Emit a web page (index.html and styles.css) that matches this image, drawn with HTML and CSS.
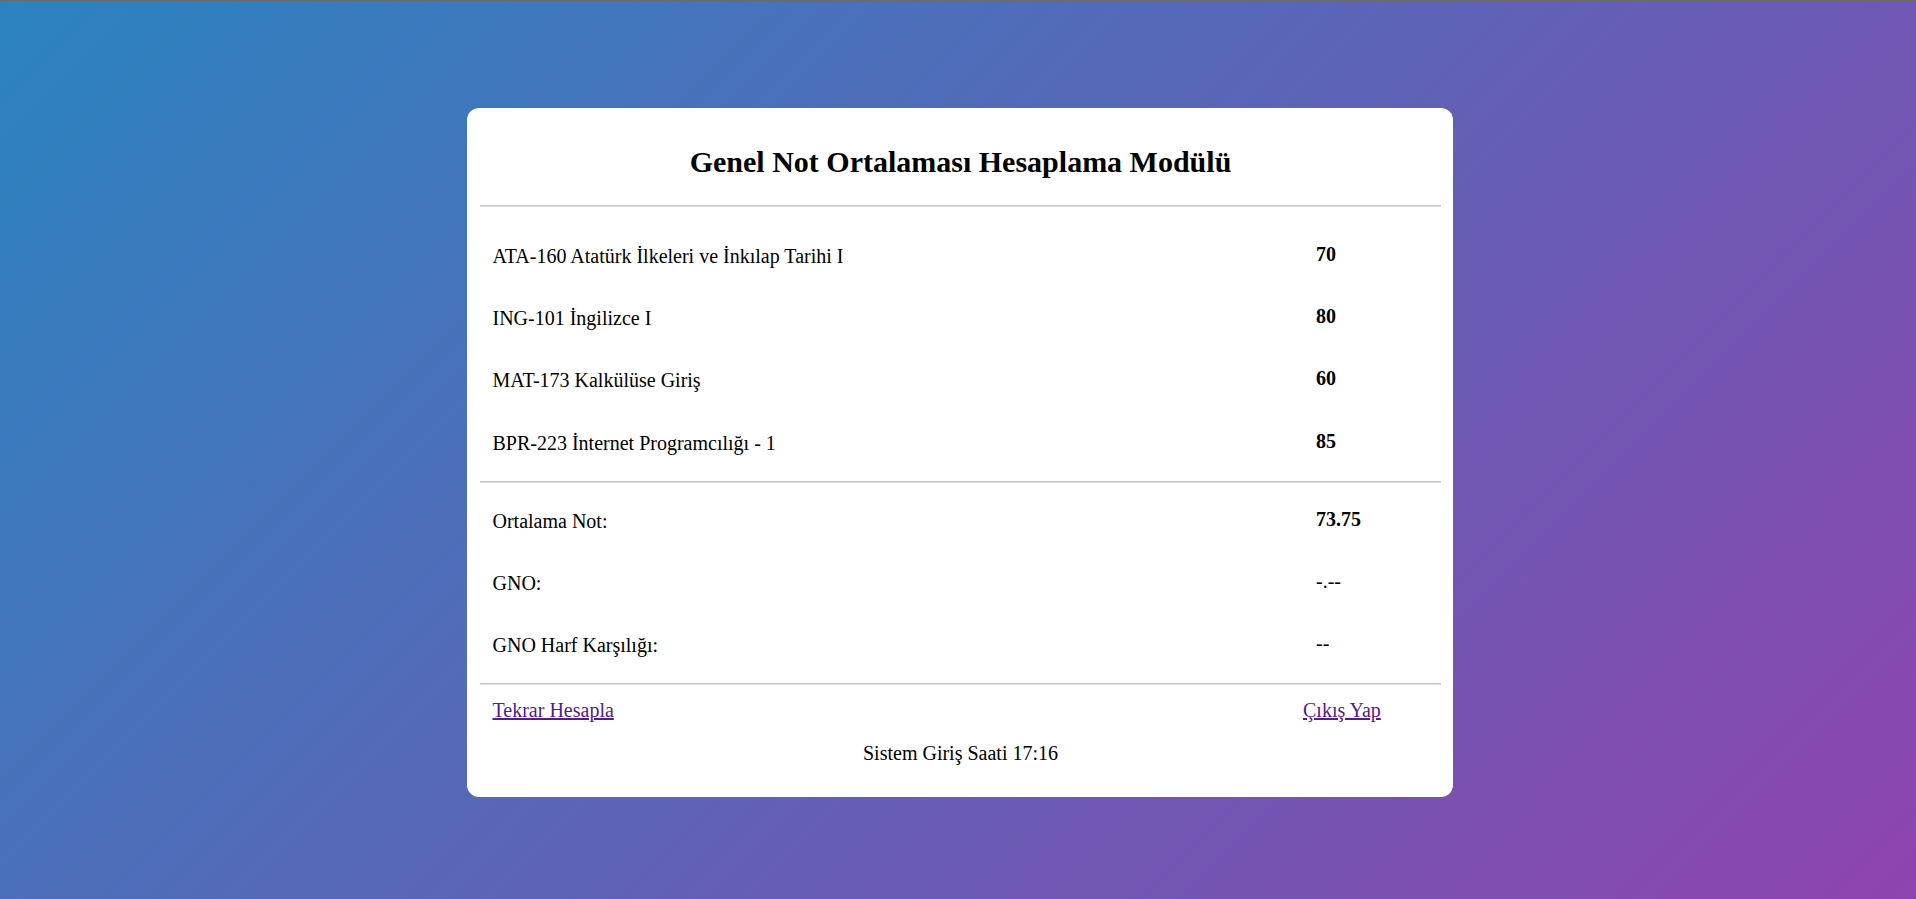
FILE: index.html
```html
<!DOCTYPE html>
<html lang="tr">
<head>
<meta charset="utf-8">
<title>Genel Not Ortalaması Hesaplama Modülü</title>
<link rel="stylesheet" href="styles.css">
</head>
<body>
<div class="page">
  <div class="card">
    <h2 class="title">Genel Not Ortalaması Hesaplama Modülü</h2>
    <div class="rule"></div>
    <div class="section first">
      <div class="row"><span class="label">ATA-160 Atatürk İlkeleri ve İnkılap Tarihi I</span><b class="value">70</b></div>
      <div class="row"><span class="label">ING-101 İngilizce I</span><b class="value">80</b></div>
      <div class="row"><span class="label">MAT-173 Kalkülüse Giriş</span><b class="value">60</b></div>
      <div class="row"><span class="label">BPR-223 İnternet Programcılığı - 1</span><b class="value">85</b></div>
    </div>
    <div class="rule"></div>
    <div class="section">
      <div class="row"><span class="label">Ortalama Not:</span><b class="value">73.75</b></div>
      <div class="row"><span class="label">GNO:</span><span class="value">-.--</span></div>
      <div class="row"><span class="label">GNO Harf Karşılığı:</span><span class="value">--</span></div>
    </div>
    <div class="rule"></div>
    <div class="links">
      <a href="#" class="link">Tekrar Hesapla</a>
      <a href="#" class="link">Çıkış Yap</a>
    </div>
    <p class="login-time">Sistem Giriş Saati 17:16</p>
  </div>
</div>
</body>
</html>
```

FILE: styles.css
```css
html, body {
  margin: 0;
  padding: 0;
}

body {
  min-height: 100vh;
  box-sizing: border-box;
  border-top: 1px solid #6b6b6b;
  background: linear-gradient(135deg, #2b84c0 0%, #8e44ad 100%);
  font-family: "Liberation Serif", "Times New Roman", serif;
  font-size: 20px;
  color: #000;
}

.page {
  display: flex;
  justify-content: center;
  padding: 106.5px 0 0 3px;
}

.card {
  width: 986px;
  box-sizing: border-box;
  background: #fff;
  border-radius: 12px;
  padding: 37.5px 11.5px 33px 13.5px;
  display: flex;
  flex-direction: column;
}

.title {
  margin: 0;
  font-size: 30px;
  font-weight: bold;
  line-height: 34px;
  text-align: center;
}

.rule {
  height: 0;
  border-top: 1px solid #c6c6c6;
  border-bottom: 1px solid #dedede;
}

.title + .rule {
  margin-top: 25.5px;
}

.section {
  display: flex;
  flex-direction: column;
  padding: 7px 0 6px;
}

.section.first {
  padding: 18px 0 7px;
}

.row {
  display: grid;
  grid-template-columns: 1fr 125px;
  align-items: center;
  height: 62.3px;
  line-height: 22px;
  padding-left: 12.5px;
}

.value {
  margin-bottom: 4px;
}

b.value {
  font-weight: bold;
}

.links {
  display: grid;
  grid-template-columns: 1fr 138px;
  padding: 14px 0 0 12.5px;
  line-height: 22px;
}

.link {
  color: #551a8b;
  text-decoration: underline;
  justify-self: start;
}

.login-time {
  margin: 21px 0 0;
  line-height: 22px;
  text-align: center;
}
```
